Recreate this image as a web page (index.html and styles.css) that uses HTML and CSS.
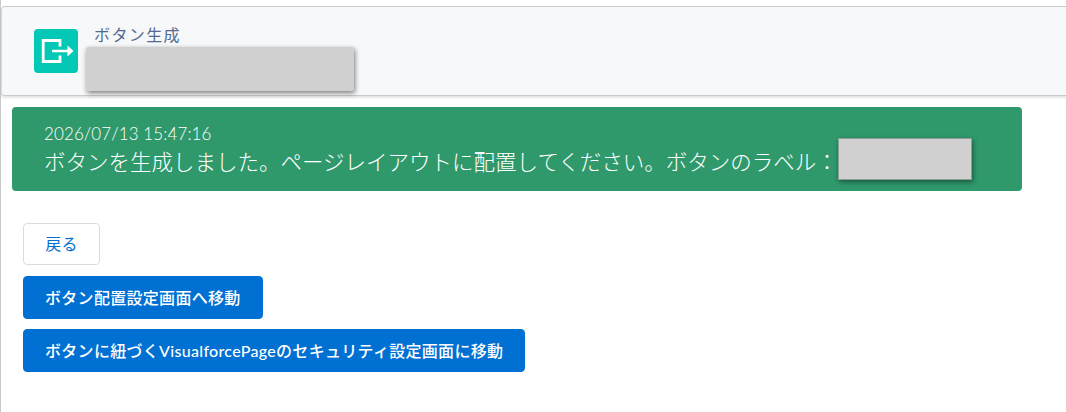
FILE: index.html
```html
<!DOCTYPE html>
<html lang="ja">
<head>
<meta charset="utf-8">
<title>ボタン生成</title>
<link rel="stylesheet" href="styles.css">
</head>
<body>
<div class="page">
  <header class="header">
    <div class="icon">
      <svg viewBox="0 0 44 44" width="44" height="44" aria-hidden="true">
        <path class="icon-line" d="M26 17.5V11.5H9.2V32.5H26V26.5"/>
        <path class="icon-arrow" d="M18 20.7H33.5V16.5L39.5 22L33.5 27.5V23.3H18Z"/>
      </svg>
    </div>
    <div class="titles">
      <div class="eyebrow">ボタン生成</div>
      <div class="redact redact-title"></div>
    </div>
  </header>
  <div class="toast">
    <div class="time">2026/07/13 15:47:16</div>
    <div class="message"><span>ボタンを生成しました。ページレイアウトに配置してください。ボタンのラベル：</span><span class="redact redact-label"></span></div>
  </div>
  <div class="actions">
    <button class="btn btn-neutral">戻る</button>
    <button class="btn btn-brand">ボタン配置設定画面へ移動</button>
    <button class="btn btn-brand">ボタンに紐づくVisualforcePageのセキュリティ設定画面に移動</button>
  </div>
</div>
</body>
</html>
```
FILE: styles.css
```css
* { box-sizing: border-box; }
html, body { margin: 0; height: 100%; overflow: hidden; background: #fff; }
body {
  font-family: Lato, "Noto Sans CJK JP", sans-serif;
  color: #181818;
}
.page {
  height: 412px;
  width: 1066px;
  padding-top: 6px;
  border-left: 1px solid #c9c9c9;
}
.header {
  display: flex;
  align-items: flex-start;
  height: 90px;
  width: 1080px;
  padding: 22px 0 0 32px;
  background: #f7f8fa;
  border: 1px solid #c9c9c9;
  border-left-color: #d8d8d8;
  border-radius: 4px;
  box-shadow: 0 2px 2px rgba(0,0,0,.1);
}
.icon {
  width: 44px;
  height: 44px;
  background: #04c8b6;
  border-radius: 4px;
  flex: none;
}
.icon svg { display: block; }
.icon-line { fill: none; stroke: #fff; stroke-width: 2.8; }
.icon-arrow { fill: #fff; }
.titles { position: relative; margin-left: 16px; }
.eyebrow {
  font-size: 16px;
  line-height: 14px;
  margin-top: -1px;
  color: #54698d;
  letter-spacing: 1.4px;
  white-space: nowrap;
}
.redact {
  background: #d0d0d0;
  box-shadow: 1px 2px 5px rgba(0,0,0,.5);
}
.redact-title {
  position: absolute;
  left: -8px;
  top: 18px;
  width: 268px;
  height: 44px;
  border-radius: 2px;
}
.toast {
  margin: 11px 0 0 11px;
  width: 1010px;
  height: 84px;
  padding: 18px 32px 0;
  background: #2f996c;
  border-radius: 4px;
  color: #fff;
}
.time { font-size: 17px; line-height: 18px; font-weight: 300; letter-spacing: .1px; }
.message {
  display: flex;
  align-items: center;
  height: 34px;
  font-size: 21.5px;
  font-weight: 300;
  white-space: nowrap;
}
.redact-label {
  flex: none;
  margin: -2px 0 0 0;
  width: 134px;
  height: 42px;
  box-shadow: 1px 2px 5px rgba(0,0,0,.45);
  border: 1px solid #8a9f96;
}
.actions {
  display: flex;
  flex-direction: column;
  align-items: flex-start;
  margin: 32px 0 0 22px;
}
.btn {
  font-family: inherit;
  font-size: 16px;
  border-radius: 4px;
  padding: 0 21px 2px;
  letter-spacing: .3px;
  white-space: nowrap;
}
.btn-neutral {
  height: 42px;
  width: 77px;
  background: #fff;
  border: 1px solid #dddbda;
  color: #0070d2;
}
.btn-brand {
  height: 43px;
  background: #0070d2;
  border: 1px solid #0070d2;
  color: #fff;
  font-weight: 500;
  margin-top: 11px;
}
.btn-brand + .btn-brand { margin-top: 10px; }
```
